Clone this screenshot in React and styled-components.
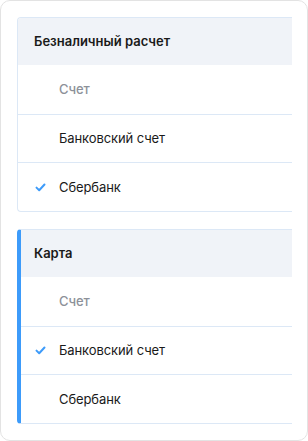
import React from "react";
import styled, { createGlobalStyle } from "styled-components";

const Global = createGlobalStyle`
  html, body { margin: 0; padding: 0; background: #fff; }
  body { font-family: Inter, "Noto Sans", sans-serif; -webkit-font-smoothing: antialiased; }
  * { box-sizing: border-box; }
`;

const Outer = styled.div`
  width: 308px;
  height: 441px;
  border: 1px solid #e3e3e3;
  border-radius: 10px;
  padding: 16px 15px 16px 16px;
  display: flex;
  flex-direction: column;
  gap: 17px;
  background: #fff;
`;

const Card = styled.div`
  border: 1px solid #dce8f6;
  border-right: none;
  border-left: ${(p) => (p.$active ? "4px solid #3d9bfa" : "1px solid #dce8f6")};
  border-radius: 4px 0 0 4px;
  overflow: hidden;
  display: flex;
  flex-direction: column;
`;

const Header = styled.div`
  height: 47px;
  background: #f0f3f8;
  display: flex;
  align-items: center;
  padding-left: ${(p) => (p.$active ? "13px" : "16px")};
  font-size: 13px;
  font-weight: 600;
  color: #1a1a1a;
`;

const Row = styled.div`
  height: 49px;
  display: flex;
  align-items: center;
  padding-left: ${(p) => (p.$active ? "14px" : "17px")};
  font-size: 13px;
  letter-spacing: -0.1px;
  color: ${(p) => (p.$muted ? "#8d9199" : "#1a1a1a")};
  font-weight: ${(p) => (p.$muted ? 500 : 400)};
  & + & { border-top: 1px solid #dce8f6; }
`;

const CheckSlot = styled.span`
  width: 24px;
  display: inline-flex;
  align-items: center;
`;

const Check = () => (
  <svg width="11" height="9" viewBox="0 0 11 9">
    <path d="M1.5 4.6 L4.2 7.2 L9.5 1.5" fill="none" stroke="#3d9bfa" strokeWidth="2" strokeLinecap="round" strokeLinejoin="round" />
  </svg>
);

const groups = [
  { title: "Безналичный расчет", active: false, checked: 2 },
  { title: "Карта", active: true, checked: 1 },
];
const items = ["Счет", "Банковский счет", "Сбербанк"];

export default function App() {
  return (
    <>
      <Global />
      <Outer>
        {groups.map((g) => (
          <Card key={g.title} $active={g.active}>
            <Header $active={g.active}>{g.title}</Header>
            {items.map((it, i) => (
              <Row key={it} $active={g.active} $muted={i === 0}>
                <CheckSlot>{g.checked === i && <Check />}</CheckSlot>
                {it}
              </Row>
            ))}
          </Card>
        ))}
      </Outer>
    </>
  );
}
